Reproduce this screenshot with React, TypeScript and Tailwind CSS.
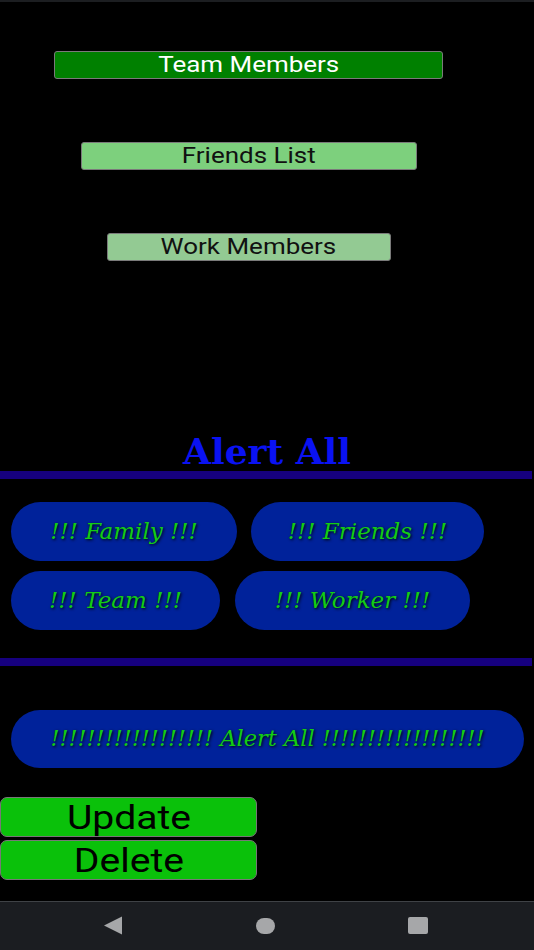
import React from 'react';

const groups = [
  { label: 'Team Members', width: 'w-[389px]', tone: 'bg-[#008000] text-white' },
  { label: 'Friends List', width: 'w-[336px]', tone: 'bg-[#7dd07d] text-[#111]' },
  { label: 'Work Members', width: 'w-[284px]', tone: 'bg-[#93ca93] text-[#111]' },
];

const bang = '!!!!!!!!!!!!!!!!!!';

const Pill = ({ label, className }: { label: string; className: string }) => (
  <button
    className={`h-[59px] rounded-full bg-[#00229a] flex items-center justify-center italic text-[23px] text-[#14cc14] [font-family:'DejaVu_Serif',serif] [text-shadow:1px_1px_3px_#000] ${className}`}
  >
    {label}
  </button>
);

const App = () => {
  return (
    <div className="w-full h-[950px] bg-black flex flex-col [font-family:Roboto,sans-serif]">
      {/* status strip */}
      <div className="h-[2px] bg-[#1c1e21]" />

      <main className="flex-1 flex flex-col">
        {/* group buttons */}
        <div className="w-[497px] mt-[49px] flex flex-col items-center gap-[63px]">
          {groups.map((g) => (
            <button
              key={g.label}
              className={`${g.width} ${g.tone} h-[28px] rounded-[3px] border border-[#7a7a7a] flex items-center justify-center text-[22px] leading-none`}
            >
              <span className="inline-block scale-x-[1.18]">{g.label}</span>
            </button>
          ))}
        </div>

        {/* heading */}
        <h1 className="mt-[170px] h-[40px] text-center text-[36px] leading-[40px] font-bold text-[#0a12f2] [font-family:'DejaVu_Serif',serif]">
          Alert All
        </h1>
        <div className="h-[8px] w-[532px] bg-[#16007e]" />

        {/* alert targets */}
        <div className="mt-[23px] px-[11px] flex flex-col gap-[10px]">
          <div className="flex gap-[14px]">
            <Pill label="!!! Family !!!" className="w-[226px]" />
            <Pill label="!!! Friends !!!" className="w-[233px]" />
          </div>
          <div className="flex gap-[15px]">
            <Pill label="!!! Team !!!" className="w-[209px]" />
            <Pill label="!!! Worker !!!" className="w-[235px]" />
          </div>
        </div>
        <div className="mt-[28px] h-[8px] w-[532px] bg-[#16007e]" />

        <button className="mt-[44px] ml-[11px] w-[513px] h-[58px] rounded-full bg-[#00229a] flex items-center justify-center italic text-[22.5px] text-[#14cc14] [font-family:'DejaVu_Serif',serif] [text-shadow:1px_1px_3px_#000]">
          {bang} Alert All {bang}
        </button>

        {/* actions */}
        <div className="mt-[29px] flex flex-col gap-[3px]">
          {['Update', 'Delete'].map((t) => (
            <button
              key={t}
              className="w-[257px] h-[40px] rounded-[7px] border-[1.5px] border-[#777] bg-[#0ac10a] text-black text-[34px] leading-none flex items-center justify-center"
            >
              <span className="inline-block scale-x-[1.15]">{t}</span>
            </button>
          ))}
        </div>
      </main>

      {/* system nav */}
      <nav className="h-[49px] bg-[#1b1d21] border-t border-[#3f4246] flex items-center">
        <div className="w-full flex items-center justify-between pl-[103px] pr-[106px] pb-[1px]">
          <svg width="19" height="19" viewBox="0 0 19 19">
            <path d="M19 0.5 L1 9.5 L19 18.5 Z" fill="#a6a7a9" strokeLinejoin="round" />
          </svg>
          <div className="w-[19px] h-[16px] rounded-full bg-[#a6a7a9]" />
          <div className="w-[20px] h-[17px] rounded-[2px] bg-[#a6a7a9]" />
        </div>
      </nav>
    </div>
  );
};

export default App;
